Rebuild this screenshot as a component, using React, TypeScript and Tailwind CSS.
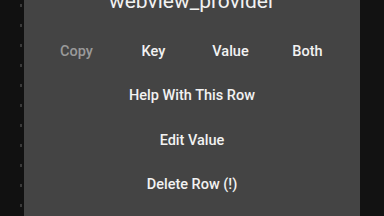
import { useMemo } from 'react';

const ACTIONS = ['Help With This Row', 'Edit Value', 'Delete Row (!)'];

export default function App() {
  // gutter marks peeking out from behind the dialog
  const marks = useMemo(() => Array.from({ length: 11 }, (_, i) => i), []);

  return (
    <div
      className="w-[384px] h-[216px] overflow-hidden bg-[#111111] flex"
      style={{ fontFamily: 'Roboto, "Open Sans", sans-serif' }}
    >
      {/* Left gutter */}
      <div className="w-[24px] shrink-0 flex flex-col items-end pr-[2px] pt-[4px] gap-[17px]">
        {marks.map((m) => (
          <div key={m} className="w-[2px] h-[3px] bg-[#3a3a3a]" />
        ))}
      </div>

      {/* Dialog */}
      <div className="w-[336px] shrink-0 h-full bg-[#444444] flex flex-col px-[14px]">
        <div className="mt-[-12px] h-[26px] text-center text-[21px] leading-[26px] text-[#f2f2f2]">
          webview_provider
        </div>

        <div className="grid grid-cols-4 mt-[29px] h-[18px] text-[14.5px] leading-[18px] font-medium text-center">
          <span className="text-[#9a9a9a]">Copy</span>
          <span className="text-[#f2f2f2]">Key</span>
          <span className="text-[#f2f2f2]">Value</span>
          <span className="text-[#f2f2f2]">Both</span>
        </div>

        <div className="flex flex-col mt-[26px] gap-[26.5px]">
          {ACTIONS.map((a) => (
            <div
              key={a}
              className="h-[18px] text-center text-[14.5px] leading-[18px] font-medium text-[#f2f2f2]"
            >
              {a}
            </div>
          ))}
        </div>
      </div>

      {/* Right gutter */}
      <div className="flex-1 bg-[#121212]" />
    </div>
  );
}
